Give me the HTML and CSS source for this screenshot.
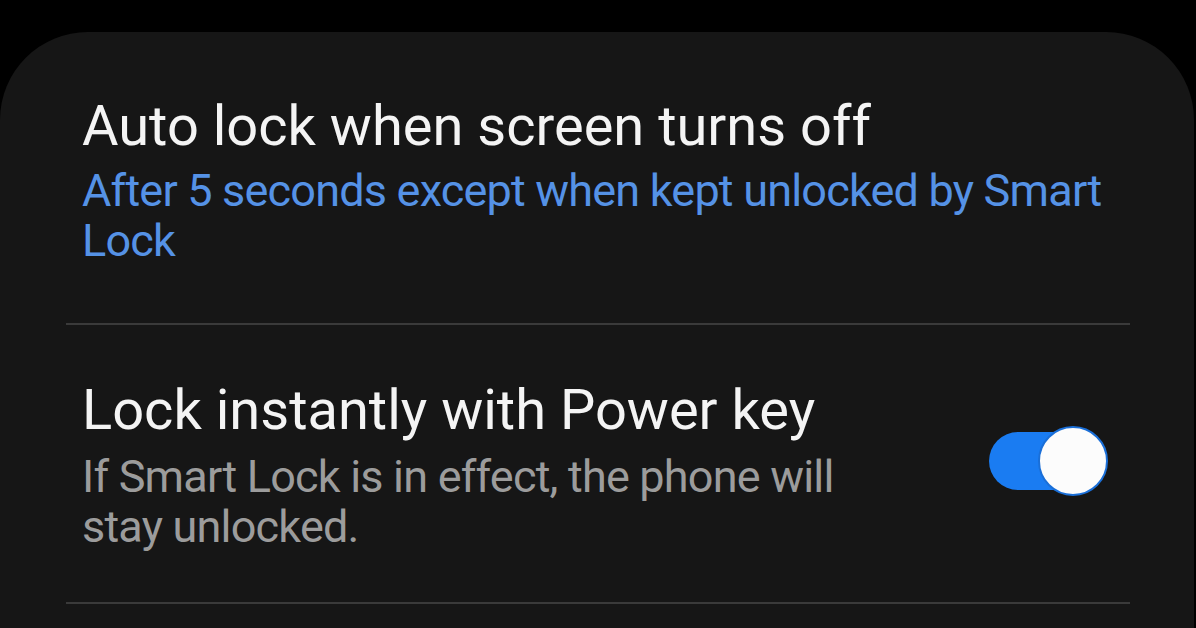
FILE: index.html
```html
<!DOCTYPE html>
<html lang="en">
<head>
<meta charset="utf-8">
<title>Lock screen settings</title>
<link rel="stylesheet" href="styles.css">
</head>
<body>
<div class="card">
  <div class="item">
    <div class="text">
      <div class="title">Auto lock when screen turns off</div>
      <div class="sub sub-blue">After 5 seconds except when kept unlocked by Smart Lock</div>
    </div>
  </div>
  <div class="divider"></div>
  <div class="item item-toggle">
    <div class="text">
      <div class="title">Lock instantly with Power key</div>
      <div class="sub sub-gray">If Smart Lock is in effect, the phone will<br>stay unlocked.</div>
    </div>
    <div class="switch"><span class="thumb"></span></div>
  </div>
  <div class="divider"></div>
</div>
</body>
</html>
```
FILE: styles.css
```css
html, body {
  margin: 0;
  padding: 0;
  background: #000;
  height: 100%;
  overflow: hidden;
}
body {
  font-family: Roboto, "Noto Sans", "Liberation Sans", sans-serif;
}
.card {
  margin-top: 32px;
  width: 1194px;
  height: 596px;
  background: #161616;
  border-radius: 88px 88px 0 0;
  box-sizing: border-box;
  padding: 62px 64px 0 66px;
}
.item {
  padding: 0 16px;
  display: flex;
  align-items: center;
}
.item-toggle {
  padding-top: 53px;
  padding-bottom: 50px;
  padding-right: 25px;
}
.item:first-child {
  padding-bottom: 57px;
}
.text {
  flex: 1;
}
.title {
  font-size: 56px;
  line-height: 64px;
  color: #f4f4f4;
}
.sub {
  font-size: 45px;
  letter-spacing: -0.8px;
  line-height: 50px;
  margin-top: 8px;
}
.sub-blue {
  color: #5592e6;
}
.sub-gray {
  color: #9c9c9c;
  margin-top: 10px;
}
.divider {
  height: 2px;
  background: #3a3a3a;
}
.switch {
  position: relative;
  width: 116px;
  height: 58px;
  border-radius: 29px;
  background: #1a7cf2;
  margin-bottom: 8px;
}
.thumb {
  position: absolute;
  right: -3px;
  top: -6px;
  width: 70px;
  height: 70px;
  border-radius: 50%;
  background: #fcfcfc;
  box-sizing: border-box;
  border: 2px solid #1a6fd8;
}
```
